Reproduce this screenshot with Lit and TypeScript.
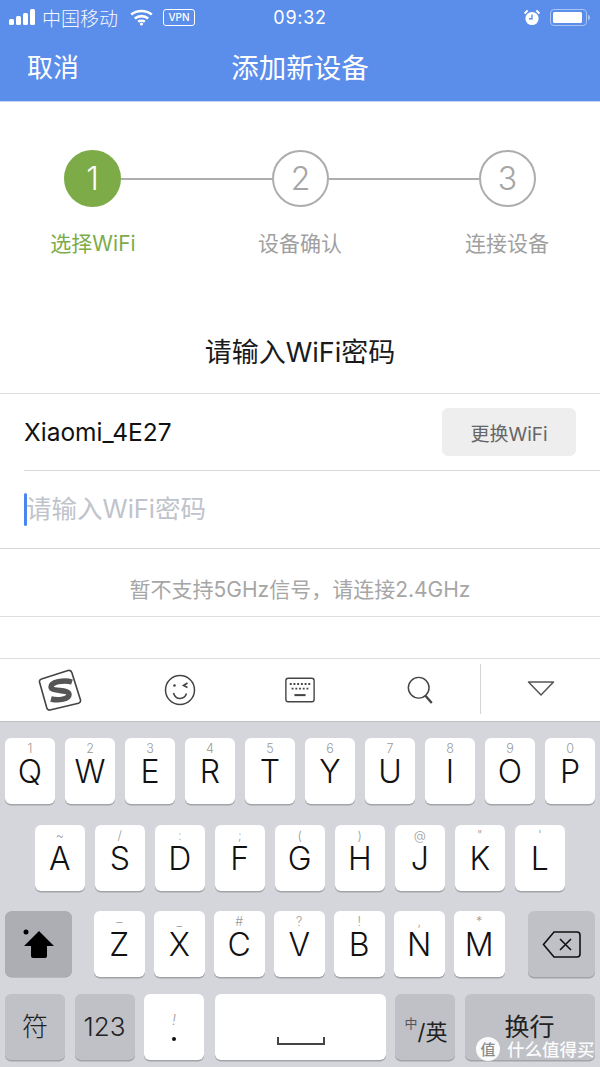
import { LitElement, html, css } from "lit";
import { customElement } from "lit/decorators.js";

type K = { l: string; s?: string };
const row1: K[] = [["Q","1"],["W","2"],["E","3"],["R","4"],["T","5"],["Y","6"],["U","7"],["I","8"],["O","9"],["P","0"]].map(([l,s])=>({l,s}));
const row2: K[] = [["A","~"],["S","/"],["D",":"],["F",";"],["G","("],["H",")"],["J","@"],["K","\""],["L","'"]].map(([l,s])=>({l,s}));
const row3: K[] = [["Z","–"],["X","_"],["C","#"],["V","?"],["B","!"],["N",","],["M","*"]].map(([l,s])=>({l,s}));

@customElement("app-root")
export class AppRoot extends LitElement {
  static styles = css`
    :host { display: block; width: 600px; height: 1067px; position: relative; overflow: hidden; background: #fff;
      font-family: Inter, "Noto Sans CJK SC", sans-serif; color: #111; }
    .head { height: 101px; background: #5b8dea; border-bottom: 1px solid #c4d6f6; color: #fff; display: flex; flex-direction: column; }
    .status { height: 34px; display: flex; align-items: center; padding: 0 0 0 9px; font-size: 17px; position: relative; }
    .bars { display: flex; align-items: flex-end; gap: 2px; height: 16px; margin-top: -1px; }
    .bars i { width: 5px; background: #fff; border-radius: 1.5px; display: block; }
    .carrier { margin-left: 7px; font-size: 19px; font-weight: 300; width: 77px; white-space: nowrap; opacity: .95; }
    .wifi { margin-left: 11px; }
    .vpn { margin-left: 10px; width: 30px; height: 15px; border: 1px solid #fff; border-radius: 3px; font-size: 10px; line-height: 15px; text-align: center; font-weight: 500; }
    .time { position: absolute; left: 0; right: 0; top: 0; height: 34px; line-height: 36px; text-align: center; font-size: 18px; font-weight: 400; letter-spacing: .7px; }
    .status-right { margin-left: auto; display: flex; align-items: center; gap: 10px; padding-right: 13px; }
    .batt { border: 1px solid #a9c4f3; border-radius: 4px; padding: 2px; box-sizing: border-box; width: 37px; height: 17px; position: relative; }
    .batt i { display: block; height: 100%; background: #fff; border-radius: 1.5px; width: 29px; }
    .batt b { position: absolute; right: -4px; top: 5px; width: 2px; height: 5px; background: #a9c4f3; border-radius: 0 2px 2px 0; }
    .nav { flex: 1; display: flex; align-items: center; position: relative; padding: 0 0 0 27px; margin-top: -4px; font-size: 26px; }
    .nav .title { position: absolute; left: 0; right: 0; text-align: center; font-size: 27.5px; }
    .steps { padding: 48px 0 0; }
    .track { padding-left: 64px; display: grid; grid-template-columns: 57px 151px 57px 150px 57px; grid-template-rows: 57px; }
    .circle { width: 57px; height: 57px; box-sizing: border-box; border-radius: 50%; border: 2px solid #adadad; color: #a5a5a5; display: flex; align-items: center; justify-content: center; font-size: 32px; font-weight: 300; }
    .circle.on { background: #7cab48; border-color: #7cab48; color: #fff; }
    .link { height: 2px; background: #adadad; align-self: center; }
    .labels { display: grid; grid-template-columns: repeat(3, 114px); column-gap: 93px; padding-left: 36px; margin-top: 22px; font-size: 21px; color: #a0a0a0; text-align: center; line-height: 30px; white-space: nowrap; }
    .labels .on { color: #7cab48; }
    .ask { height: 135px; padding-top: 48px; display: flex; align-items: center; justify-content: center; font-size: 27px; color: #1a1a1a; border-bottom: 1px solid #dcdcdc; box-sizing: border-box; }
    .net { margin-left: 24px; height: 77px; box-sizing: border-box; border-bottom: 1px solid #d8d8d8; display: flex; align-items: center; justify-content: space-between; padding-right: 24px; font-size: 24.5px; color: #111; }
    .change { width: 134px; height: 48px; background: #eeeeee; border-radius: 6px; color: #666; font-size: 19px; display: flex; align-items: center; justify-content: center; }
    .pw { height: 77px; border-bottom: 1px solid #d8d8d8; padding-left: 24px; display: flex; align-items: center; font-size: 25.5px; color: #bfc3cb; }
    .pw span { margin-top: -7px; }
    .caret { width: 3px; height: 33px; background: #4a86f0; border-radius: 1.5px; margin-right: -1px; margin-top: -1px; }
    .hint { height: 67px; box-sizing: content-box; border-bottom: 1px solid #dedede; display: flex; align-items: center; justify-content: center; font-size: 21px; color: #a6a6a6; white-space: nowrap; padding-top: 0; }
    .hint span { margin-top: 11px; }
    .gap { height: 41px; border-bottom: 1px solid #dedede; }
    .tools { height: 62px; display: grid; grid-template-columns: repeat(5, 120px); background: #fff; border-bottom: 1px solid #bfc1c6; }
    .tools div { display: flex; align-items: center; justify-content: center; }
    .tools .last { border-left: 1px solid #d4d4d4; margin: 5px 0 7px; }
    .kb { background: #d4d6db; height: 345px; box-sizing: border-box; padding-top: 16px; display: flex; flex-direction: column; }
    .row { display: flex; gap: 9.5px; height: 66px; }
    .row.r1 { padding-left: 5px; gap: 10px; margin-bottom: 21px; }
    .row.r2 { padding-left: 34.5px; margin-bottom: 20px; }
    .row.r3 { padding-left: 5px; margin-bottom: 17px; }
    .row.r4 { padding-left: 5px; }
    .key { width: 50.5px; height: 66px; box-sizing: border-box; background: #fff; border-radius: 6px; box-shadow: 0 1.5px 0 #a1a3a8; position: relative; display: flex; align-items: center; justify-content: center; font-size: 32px; line-height: 32px; font-weight: 300; color: #111; padding-top: 1px; }
    .key small { position: absolute; left: 0; right: 0; top: 4px; text-align: center; font-size: 12.5px; line-height: 13px; color: #9a9a9a; font-weight: 300; }
    .r1 .key { width: 50px; }
    .gray { background: #bfc1c7; }
    .shift { width: 67px; background: #acaeb4; margin-right: 12.5px; border-radius: 7px; box-shadow: 0 0.5px 0 #9a9ca1; }
    .del { width: 67px; margin-left: 14px; }
    .fn { font-size: 26px; padding: 0; color: #222; }
    .fn.f1, .fn.f2, .excl { width: 60px; }
    .excl small { top: 19px; font-size: 14px; font-style: italic; }
    .dot { width: 4px; height: 4px; background: #111; border-radius: 50%; position: absolute; left: 28px; top: 43px; }
    .space { width: 171px; margin-left: 1px; }
    .space svg { position: absolute; left: 62px; top: 43px; }
    .zhen { width: 60px; font-size: 22px; padding: 10px 0 0 2px; color: #222; font-weight: 400; }
    .zhen sup { font-size: 13px; line-height: 14px; position: relative; top: -9px; color: #555; }
    .ret { width: 130px; font-size: 25px; color: #222; font-weight: 400; padding: 0 0 1px; }
    .mark { position: absolute; left: 476px; top: 1036px; display: flex; align-items: center; gap: 7px; color: #fff; font-size: 17.5px; font-weight: 500; opacity: .95; white-space: nowrap; }
    .mark .m { width: 24px; height: 24px; border-radius: 50%; background: #fff; color: #888; font-size: 15px; display: flex; align-items: center; justify-content: center; }
  `;

  private key(k: K) {
    return html`<div class="key"><small>${k.s}</small>${k.l}</div>`;
  }

  render() {
    return html`
      <div class="head">
        <div class="status">
          <div class="bars"><i style="height:6px"></i><i style="height:9px"></i><i style="height:12px"></i><i style="height:16px"></i></div>
          <div class="carrier">中国移动</div>
          <svg class="wifi" width="23" height="17" viewBox="0 0 23 17" fill="none" stroke="#fff" stroke-width="2.6">
            <path d="M1.2 5.6C7 .8 16 .8 21.8 5.6"/><path d="M4.8 9.4C8.6 6.3 14.4 6.3 18.2 9.4"/><path d="M8.2 12.8C10 11.4 13 11.4 14.8 12.8"/>
            <circle cx="11.5" cy="15" r="1.6" fill="#fff" stroke="none"/>
          </svg>
          <div class="vpn">VPN</div>
          <div class="time">09:32</div>
          <div class="status-right">
            <svg width="16" height="17" viewBox="0 0 16 17"><circle cx="8" cy="9.5" r="6.6" fill="#fff"/><path d="M8 5.5V9.8H5" stroke="#5b8dea" stroke-width="1.4" fill="none"/><path d="M.6 4.5 3.6 1.4M15.4 4.5 12.4 1.4" stroke="#fff" stroke-width="2"/></svg>
            <div class="batt"><i></i><b></b></div>
          </div>
        </div>
        <div class="nav"><span>取消</span><span class="title">添加新设备</span></div>
      </div>
      <div class="steps">
        <div class="track">
          <div class="circle on">1</div><div class="link"></div>
          <div class="circle">2</div><div class="link"></div>
          <div class="circle">3</div>
        </div>
        <div class="labels"><span class="on">选择WiFi</span><span>设备确认</span><span>连接设备</span></div>
      </div>
      <div class="ask">请输入WiFi密码</div>
      <div class="net"><span>Xiaomi_4E27</span><div class="change">更换WiFi</div></div>
      <div class="pw"><i class="caret"></i><span>请输入WiFi密码</span></div>
      <div class="hint"><span>暂不支持5GHz信号，请连接2.4GHz</span></div>
      <div class="gap"></div>
      <div class="tools">
        <div>
          <svg width="44" height="42" viewBox="0 0 44 42">
            <path d="M3.5 10 30 1.500Q33 .8 33.800 3.500L42.500 31Q43 33.500 40.500 34.300L12 41Q9.500 41.500 8.800 39L1.500 13Q1 10.800 3.500 10Z" fill="#fff" stroke="#444" stroke-width="1.600"/>
            <path d="M34 13C26 10.500 12.500 13 13 18C13.500 23 31 20 31 25.500C31 30 21 32 13 30" fill="none" stroke="#555" stroke-width="5.500"/>
          </svg>
        </div>
        <div>
          <svg width="32" height="32" viewBox="0 0 32 32" fill="none" stroke="#444" stroke-width="1.500">
            <circle cx="16" cy="16" r="14.500"/><circle cx="10.500" cy="11.500" r="1.300" fill="#444" stroke="none"/><path d="M23.500 9 19.500 11.500 23.500 13.500M9.500 19C12 27 20.500 25.500 22.500 19.500" stroke-width="1.600"/>
          </svg>
        </div>
        <div>
          <svg width="30" height="26" viewBox="0 0 32 28" fill="none">
            <rect x=".8" y="1.300" width="30.400" height="25.400" rx="2.500" stroke="#444" stroke-width="1.500"/>
            <path d="M5 7.500H27M7 12.500H25" stroke="#444" stroke-width="2" stroke-dasharray="2 2"/><path d="M10 19.500H22" stroke="#444" stroke-width="2.200"/>
          </svg>
        </div>
        <div>
          <svg width="27" height="28" viewBox="0 0 30 31" fill="none" stroke="#444"><circle cx="13" cy="13" r="11.500" stroke-width="1.600"/><path d="M20.500 22 27.500 30" stroke-width="2.600"/></svg>
        </div>
        <div class="last">
          <svg width="28" height="18" viewBox="0 0 28 18" fill="none" stroke="#555" stroke-width="1.500" stroke-linejoin="round"><path d="M1.500 2H26.500L14 15Z"/></svg>
        </div>
      </div>
      <div class="kb">
        <div class="row r1">${row1.map((k) => this.key(k))}</div>
        <div class="row r2">${row2.map((k) => this.key(k))}</div>
        <div class="row r3">
          <div class="key shift">
            <svg width="32" height="32" viewBox="0 0 32 32"><circle cx="3" cy="3" r="2.500" fill="#000"/><path d="M16 2 31 17H24V27Q24 29 22 29H10Q8 29 8 27V17H1Z" fill="#000"/></svg>
          </div>
          ${row3.map((k) => this.key(k))}
          <div class="key gray del">
            <svg width="39" height="27" viewBox="0 0 39 27" fill="none" stroke="#111" stroke-width="1.600"><path d="M12 1H35Q38 1 38 4V23Q38 26 35 26H12L1.500 13.500Z"/><path d="M18 8 29 19M29 8 18 19"/></svg>
          </div>
        </div>
        <div class="row r4">
          <div class="key gray fn f1">符</div>
          <div class="key gray fn f2">123</div>
          <div class="key excl"><small>!</small><i class="dot"></i></div>
          <div class="key space"><svg width="48" height="9" viewBox="0 0 48 9" fill="none" stroke="#444" stroke-width="2"><path d="M1 0V7H47V0"/></svg></div>
          <div class="key gray zhen"><sup>中</sup>/英</div>
          <div class="key gray ret">换行</div>
        </div>
      </div>
      <div class="mark"><span class="m">值</span><span>什么值得买</span></div>
    `;
  }
}
